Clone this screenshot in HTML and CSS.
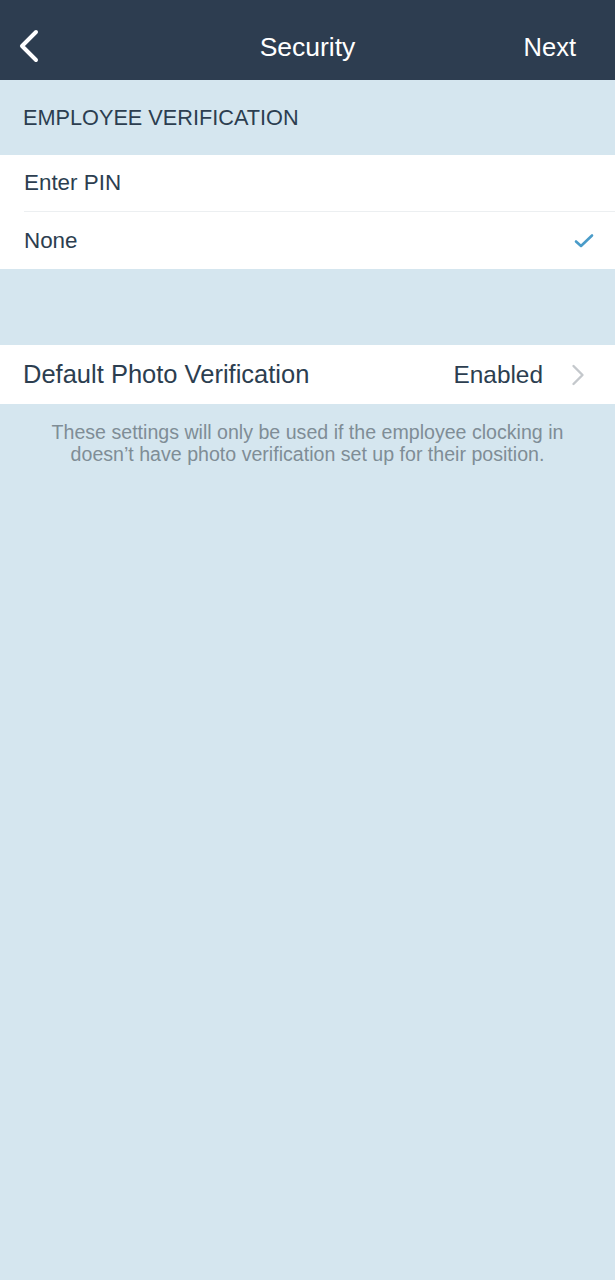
FILE: index.html
```html
<!DOCTYPE html>
<html>
<head>
<meta charset="utf-8">
<link rel="stylesheet" href="styles.css">
</head>
<body>
<div class="screen">
  <header class="nav">
    <div class="nav-left">
      <svg class="back" width="22" height="34" viewBox="0 0 22 34"><path d="M18 3 L4 17 L18 31" fill="none" stroke="#ffffff" stroke-width="4" stroke-linecap="round" stroke-linejoin="round"/></svg>
    </div>
    <div class="nav-title">Security</div>
    <div class="nav-right">Next</div>
  </header>
  <div class="section-header">EMPLOYEE VERIFICATION</div>
  <div class="group">
    <div class="row"><span class="label">Enter PIN</span></div>
    <div class="row last">
      <span class="label">None</span>
      <svg class="check" width="20" height="16" viewBox="0 0 20 16"><path d="M2 8.5 L7 13 L18 2.5" fill="none" stroke="#4a9cc9" stroke-width="2.6" stroke-linecap="round" stroke-linejoin="round"/></svg>
    </div>
  </div>
  <div class="spacer"></div>
  <div class="group">
    <div class="row tall last">
      <span class="label big">Default Photo Verification</span>
      <span class="value">Enabled</span>
      <svg class="chev" width="14" height="22" viewBox="0 0 14 22"><path d="M2.5 2 L11.5 11 L2.5 20" fill="none" stroke="#c4c8cc" stroke-width="2.4" stroke-linecap="round" stroke-linejoin="round"/></svg>
    </div>
  </div>
  <p class="footer">These settings will only be used if the employee clocking in doesn’t have photo verification set up for their position.</p>
</div>
</body>
</html>
```
FILE: styles.css
```css
html, body {
  margin: 0;
  padding: 0;
}
body {
  background: #d5e6ef;
  font-family: "Liberation Sans", Arial, sans-serif;
  color: #2c3e50;
}
.screen {
  min-height: 1280px;
  background: #d5e6ef;
}
.nav {
  height: 80px;
  background: #2d3d50;
  display: grid;
  grid-template-columns: 1fr auto 1fr;
  align-items: center;
  color: #ffffff;
  box-sizing: border-box;
  padding: 0 39px;
}
.nav-left {
  display: flex;
  align-items: center;
  padding-top: 12px;
  margin-left: -21px;
}
.nav-left .back {
  display: block;
}
.nav-title {
  font-size: 26.5px;
  padding-top: 15px;
}
.nav-right {
  justify-self: end;
  font-size: 25.5px;
  padding-top: 15px;
}
.section-header {
  height: 75px;
  box-sizing: border-box;
  padding: 25px 0 0 23px;
  font-size: 21.7px;
  color: #2c3e50;
}
.group {
  background: #ffffff;
}
.row {
  height: 56px;
  display: flex;
  align-items: center;
  margin-left: 24px;
  padding-right: 21px;
  border-bottom: 1px solid #eceff1;
}
.row.last {
  border-bottom: none;
  height: 57px;
}
.row.tall {
  height: 59px;
  margin-left: 23px;
  padding-right: 30px;
}
.label {
  font-size: 22.4px;
  flex: 1;
}
.label.big {
  font-size: 25.5px;
}
.value {
  font-size: 24.4px;
  margin-right: 28px;
}
.check {
  display: block;
}
.chev {
  display: block;
}
.spacer {
  height: 76px;
}
.footer {
  margin: 17px 40px 0;
  text-align: center;
  font-size: 19.6px;
  line-height: 22px;
  color: #7f8d96;
}
```
